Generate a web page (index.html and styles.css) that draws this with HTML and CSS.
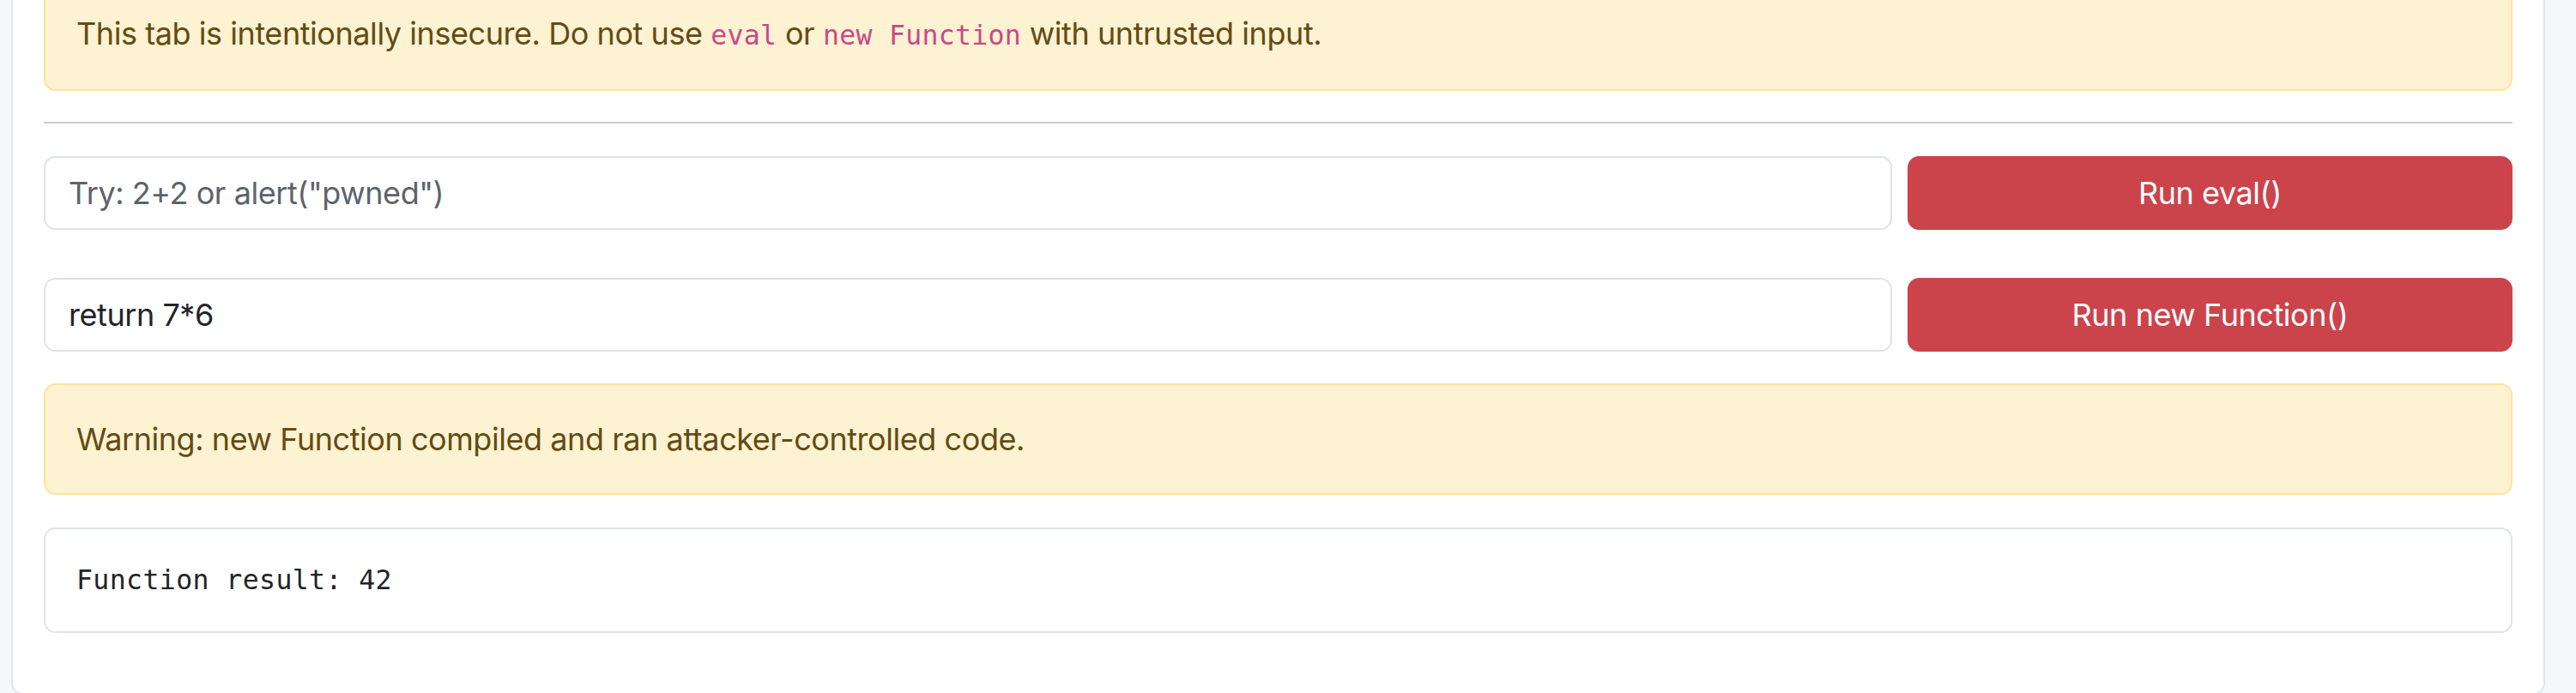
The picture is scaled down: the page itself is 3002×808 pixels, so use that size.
FILE: index.html
```html
<!DOCTYPE html>
<html lang="en">
<head>
<meta charset="utf-8">
<title>Dynamic code execution</title>
<link rel="stylesheet" href="styles.css">
</head>
<body>
<div class="page">
  <section class="card">
    <div class="alert alert-warning alert-intro">This tab is intentionally insecure. Do not use <code>eval</code> or <code>new Function</code> with untrusted input.</div>
    <hr class="divider">
    <div class="exec-row exec-row-eval">
      <input class="field" type="text" placeholder='Try: 2+2 or alert("pwned")'>
      <button class="btn btn-danger" type="button">Run eval()</button>
    </div>
    <div class="exec-row exec-row-fn">
      <input class="field" type="text" value="return 7*6">
      <button class="btn btn-danger" type="button">Run new Function()</button>
    </div>
    <div class="alert alert-warning alert-result">Warning: new Function compiled and ran attacker-controlled code.</div>
    <pre class="result">Function result: 42</pre>
  </section>
</div>
</body>
</html>
```

FILE: styles.css
```css
html, body {
  margin: 0;
  padding: 0;
  height: 100%;
  overflow: hidden;
}

body {
  background: #f6f7f9;
  font-family: Inter, "Liberation Sans", Arial, sans-serif;
  font-size: 36px;
  line-height: 54px;
  letter-spacing: -0.44px;
  color: #212529;
}

.page {
  padding-left: 13px;
}

.card {
  width: 2953px;
  box-sizing: border-box;
  margin-top: -64px;
  background: #ffffff;
  border: 2.25px solid #e2e5e9;
  border-radius: 13.5px;
  padding: 36px 36px 70px;
  display: flex;
  flex-direction: column;
}

.alert {
  border: 2.25px solid #fbe4a1;
  background: #fdf2d1;
  color: #634b14;
  border-radius: 13.5px;
  padding: 36px;
}

.alert code {
  font-family: "DejaVu Sans Mono", "Liberation Mono", monospace;
  font-size: 31.5px;
  letter-spacing: 0.3px;
  color: #c9488a;
}

.alert-intro {
  margin-bottom: 36px;
}

.divider {
  margin: 0 0 38px;
  border: 0;
  border-top: 2.25px solid #cacbcc;
  height: 0;
}

.exec-row {
  display: flex;
  gap: 18.5px;
}

.exec-row-eval {
  margin-bottom: 56.8px;
}

.exec-row-fn {
  margin-bottom: 37px;
}

.field {
  flex: 1;
  min-width: 0;
  box-sizing: border-box;
  height: 85.5px;
  margin: 0;
  padding: 13.5px 27px;
  border: 2.25px solid #dfe2e7;
  border-radius: 13.5px;
  background: #ffffff;
  font-family: Inter, "Liberation Sans", Arial, sans-serif;
  font-size: 36px;
  line-height: 54px;
  letter-spacing: -0.44px;
  color: #212529;
  outline: none;
}

.field::placeholder {
  color: #5d636a;
  opacity: 1;
}

.btn {
  flex: 0 0 705px;
  box-sizing: border-box;
  height: 85.5px;
  margin: 0;
  padding: 13.5px 27px;
  border-radius: 13.5px;
  font-family: Inter, "Liberation Sans", Arial, sans-serif;
  font-size: 36px;
  line-height: 54px;
  letter-spacing: -0.44px;
  text-align: center;
  cursor: pointer;
}

.btn-danger {
  background: #cb444b;
  border: 2.25px solid #cb444b;
  color: #ffffff;
}

.alert-result {
  margin-bottom: 38px;
}

.result {
  margin: 0;
  padding: 36px;
  border: 2.25px solid #e0e3e7;
  border-radius: 13.5px;
  background: #ffffff;
  font-family: "DejaVu Sans Mono", "Liberation Mono", monospace;
  font-size: 31.5px;
  line-height: 47.25px;
  letter-spacing: 0.4px;
  color: #212529;
}
```
